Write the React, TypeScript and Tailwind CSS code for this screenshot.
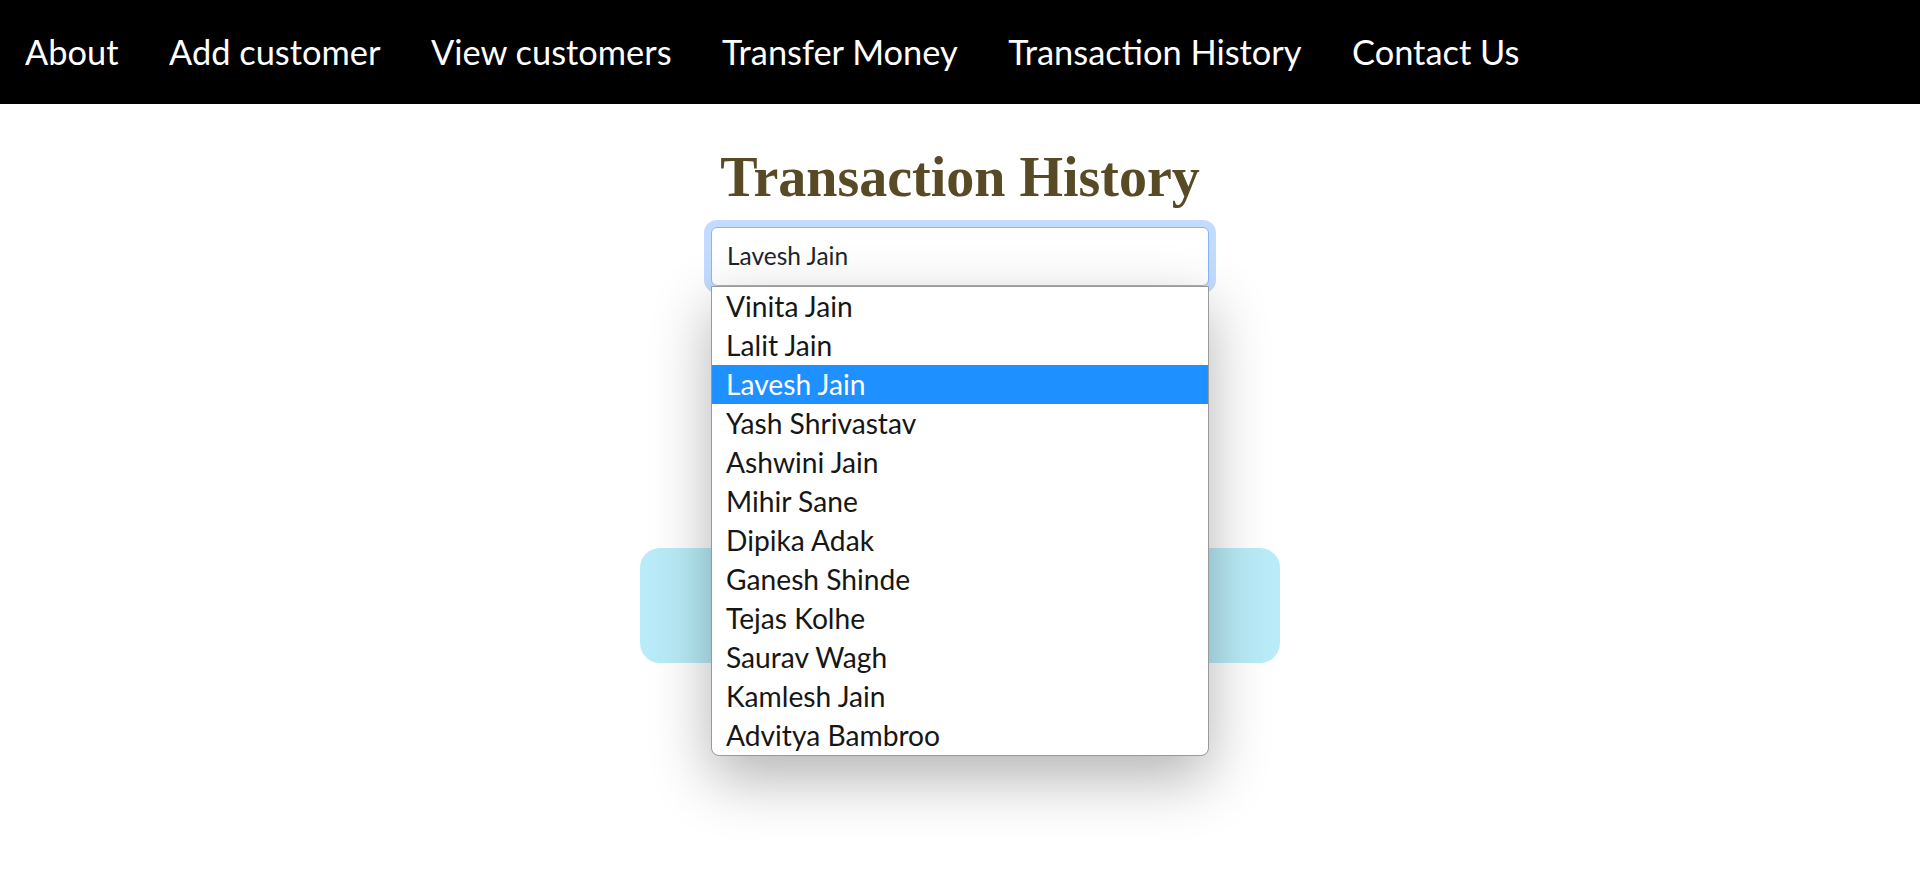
import React from "react";

const navItems = [
  "About",
  "Add customer",
  "View customers",
  "Transfer Money",
  "Transaction History",
  "Contact Us",
];

const customers = [
  "Vinita Jain",
  "Lalit Jain",
  "Lavesh Jain",
  "Yash Shrivastav",
  "Ashwini Jain",
  "Mihir Sane",
  "Dipika Adak",
  "Ganesh Shinde",
  "Tejas Kolhe",
  "Saurav Wagh",
  "Kamlesh Jain",
  "Advitya Bambroo",
];

export default function App() {
  return (
    <div className="min-h-[885px] bg-white font-['Lato',sans-serif]">
      <nav className="flex h-[104px] items-center gap-[50.5px] bg-black px-[25px]">
        {navItems.map((item) => (
          <a
            key={item}
            href="#"
            className="text-[34.4px] leading-[42px] text-white no-underline"
          >
            {item}
          </a>
        ))}
      </nav>

      <main className="flex flex-col items-center">
        <h1 className="mt-[45px] font-['Liberation_Serif',serif] text-[56px] font-bold leading-[56px] text-[#574a24]">
          Transaction History
        </h1>

        <div className="relative z-10 mt-[22px] w-[498px]">
          <div className="flex h-[59px] items-center rounded-[6px] border border-[#86b7fe] bg-white pl-[15px] text-[24.5px] text-[#212529] shadow-[0_0_0_7px_#c2dbfe]">
            Lavesh Jain
          </div>
          <ul className="absolute left-0 top-full w-full overflow-hidden rounded-b-[8px] border border-[#9a9a9a] bg-white shadow-[0_22px_60px_rgba(0,0,0,0.30)]">
            {customers.map((name) => (
              <li
                key={name}
                className={
                  name === "Lavesh Jain"
                    ? "flex h-[39px] items-center bg-[#1e90ff] pl-[14px] text-[28.2px] text-white"
                    : "flex h-[39px] items-center pl-[14px] text-[28.2px] text-[#161616]"
                }
              >
                {name}
              </li>
            ))}
          </ul>
        </div>

        <section className="mt-[262px] h-[115px] w-[640px] rounded-[20px] bg-[#b9ecf8]" />
      </main>
    </div>
  );
}
